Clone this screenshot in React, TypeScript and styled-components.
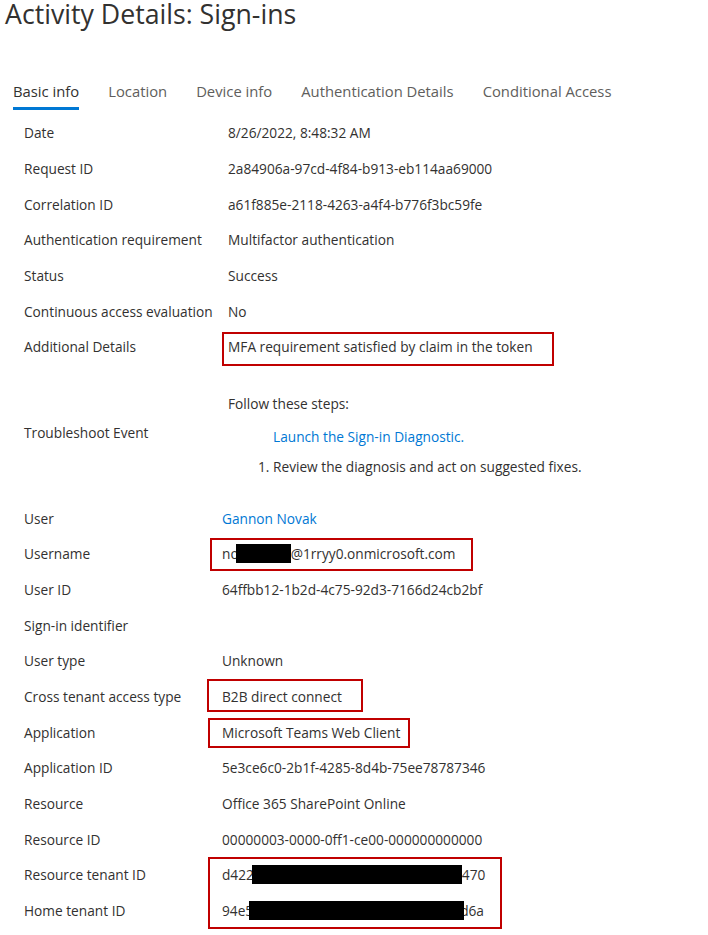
import React from "react";
import styled, { createGlobalStyle } from "styled-components";

const GlobalStyle = createGlobalStyle`
  body {
    margin: 0;
    background: #ffffff;
    font-family: "Segoe UI", "Open Sans", sans-serif;
    color: #323130;
  }
`;

const Page = styled.div`
  width: 708px;
  min-height: 935px;
  overflow: hidden;
`;

const Title = styled.h1`
  margin: 0;
  padding-left: 5px;
  height: 76px;
  font-size: 26.7px;
  font-weight: 400;
  line-height: 27px;
  color: #323130;
`;

const TabBar = styled.div`
  display: flex;
  gap: 29px;
  padding-left: 13px;
`;

const Tab = styled.div<{ $active?: boolean }>`
  position: relative;
  box-sizing: border-box;
  height: 34px;
  padding-top: 1px;
  line-height: 28px;
  font-size: 14.8px;
  color: ${(p) => (p.$active ? "#323130" : "#605e5c")};
  cursor: pointer;

  &::after {
    content: "";
    position: absolute;
    left: 0;
    right: 0;
    bottom: 0;
    height: 3px;
    background: ${(p) => (p.$active ? "#0078d4" : "transparent")};
  }
`;

const Details = styled.div`
  padding: 5px 0 0 24px;
`;

const Row = styled.div<{ $labelWidth: number }>`
  display: grid;
  grid-template-columns: ${(p) => p.$labelWidth}px 1fr;
  align-items: center;
  height: 35.65px;
  font-size: 13.7px;
`;

const Label = styled.div`
  color: #323130;
  white-space: nowrap;
`;

const Value = styled.div<{ $link?: boolean }>`
  position: relative;
  height: 100%;
  display: flex;
  align-items: center;
  white-space: nowrap;
  color: ${(p) => (p.$link ? "#0078d4" : "#323130")};
`;

const Annot = styled.span<{ $l: number; $t: number; $w: number; $h: number }>`
  position: absolute;
  left: ${(p) => p.$l}px;
  top: ${(p) => p.$t}px;
  width: ${(p) => p.$w}px;
  height: ${(p) => p.$h}px;
  box-sizing: border-box;
  border: 2px solid #c00000;
  pointer-events: none;
`;

const Redact = styled.span<{ $w: number; $shift: number }>`
  display: inline-block;
  position: relative;
  width: ${(p) => p.$w}px;
  height: 19px;
  margin-left: ${(p) => p.$shift}px;
  background: #000000;
`;

const Tail = styled.span`
  margin-left: -4px;
`;

const TroubleRow = styled.div`
  display: grid;
  grid-template-columns: 204px 1fr;
  align-items: center;
  height: 136px;
  font-size: 13.7px;
`;

const Steps = styled.div`
  align-self: start;
  padding-top: 25px;
  color: #323130;
`;

const StepIntro = styled.div`
  line-height: 30px;
  margin-bottom: 3px;
`;

const StepLink = styled.div`
  padding-left: 45px;
  line-height: 30px;
  color: #0078d4;
  cursor: pointer;
`;

const StepList = styled.ol`
  margin: 0;
  padding-left: 45px;
  line-height: 30px;
`;

type Box = { l: number; t: number; w: number; h: number };

interface Field {
  label: string;
  value?: React.ReactNode;
  link?: boolean;
  box?: Box;
}

const tabs = [
  "Basic info",
  "Location",
  "Device info",
  "Authentication Details",
  "Conditional Access",
];

const topFields: Field[] = [
  { label: "Date", value: "8/26/2022, 8:48:32 AM" },
  { label: "Request ID", value: "2a84906a-97cd-4f84-b913-eb114aa69000" },
  { label: "Correlation ID", value: "a61f885e-2118-4263-a4f4-b776f3bc59fe" },
  { label: "Authentication requirement", value: "Multifactor authentication" },
  { label: "Status", value: "Success" },
  { label: "Continuous access evaluation", value: "No" },
  {
    label: "Additional Details",
    value: "MFA requirement satisfied by claim in the token",
    box: { l: -6, t: 3, w: 332, h: 34 },
  },
];

const userFields: Field[] = [
  { label: "User", value: "Gannon Novak", link: true },
  {
    label: "Username",
    value: (
      <>
        no<Redact $w={55} $shift={-3} />@1rryy0.onmicrosoft.com
      </>
    ),
    box: { l: -12, t: 2, w: 263, h: 33 },
  },
  { label: "User ID", value: "64ffbb12-1b2d-4c75-92d3-7166d24cb2bf" },
  { label: "Sign-in identifier" },
  { label: "User type", value: "Unknown" },
  {
    label: "Cross tenant access type",
    value: "B2B direct connect",
    box: { l: -15, t: 0, w: 156, h: 33 },
  },
  {
    label: "Application",
    value: "Microsoft Teams Web Client",
    box: { l: -14, t: 4, w: 202, h: 30 },
  },
  { label: "Application ID", value: "5e3ce6c0-2b1f-4285-8d4b-75ee78787346" },
  { label: "Resource", value: "Office 365 SharePoint Online" },
  { label: "Resource ID", value: "00000003-0000-0ff1-ce00-000000000000" },
  {
    label: "Resource tenant ID",
    value: (
      <>
        d422<Redact $w={210} $shift={-2} />470
      </>
    ),
    box: { l: -14, t: 0, w: 294, h: 72 },
  },
  {
    label: "Home tenant ID",
    value: (
      <>
        94e5<Redact $w={215} $shift={-4} />
        <Tail>d6a</Tail>
      </>
    ),
  },
];

function DetailRow({ field, labelWidth }: { field: Field; labelWidth: number }) {
  return (
    <Row $labelWidth={labelWidth}>
      <Label>{field.label}</Label>
      <Value $link={field.link}>
        {field.value}
        {field.box && (
          <Annot $l={field.box.l} $t={field.box.t} $w={field.box.w} $h={field.box.h} />
        )}
      </Value>
    </Row>
  );
}

export default function App() {
  const [active, setActive] = React.useState(0);

  return (
    <>
      <GlobalStyle />
      <Page>
        <Title>Activity Details: Sign-ins</Title>
        <TabBar>
          {tabs.map((tab, i) => (
            <Tab key={tab} $active={active === i} onClick={() => setActive(i)}>
              {tab}
            </Tab>
          ))}
        </TabBar>

        <Details>
          {topFields.map((f) => (
            <DetailRow key={f.label} field={f} labelWidth={204} />
          ))}

          <TroubleRow>
            <Label>Troubleshoot Event</Label>
            <Steps>
              <StepIntro>Follow these steps:</StepIntro>
              <StepLink>Launch the Sign-in Diagnostic.</StepLink>
              <StepList>
                <li>Review the diagnosis and act on suggested fixes.</li>
              </StepList>
            </Steps>
          </TroubleRow>

          {userFields.map((f) => (
            <DetailRow key={f.label} field={f} labelWidth={198} />
          ))}
        </Details>
      </Page>
    </>
  );
}
